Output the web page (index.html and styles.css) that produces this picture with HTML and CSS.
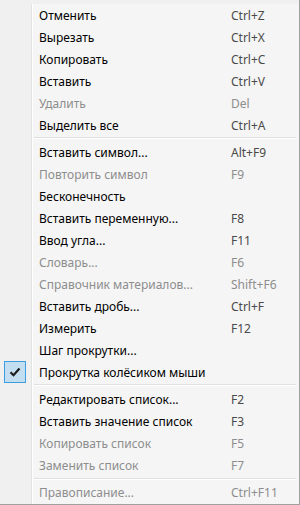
FILE: index.html
```html
<!DOCTYPE html>
<html lang="ru">
<head>
    <meta charset="UTF-8">
    <title>Меню</title>
    <link rel="stylesheet" href="styles.css">
</head>
<body>
    <div class="menu">
        <div class="item"><span class="icon"></span><span class="label">Отменить</span><span class="key">Ctrl+Z</span></div>
        <div class="item"><span class="icon"></span><span class="label">Вырезать</span><span class="key">Ctrl+X</span></div>
        <div class="item"><span class="icon"></span><span class="label">Копировать</span><span class="key">Ctrl+C</span></div>
        <div class="item"><span class="icon"></span><span class="label">Вставить</span><span class="key">Ctrl+V</span></div>
        <div class="item disabled"><span class="icon"></span><span class="label">Удалить</span><span class="key">Del</span></div>
        <div class="item"><span class="icon"></span><span class="label">Выделить все</span><span class="key">Ctrl+A</span></div>
        <div class="sep"></div>
        <div class="item"><span class="icon"></span><span class="label">Вставить символ...</span><span class="key">Alt+F9</span></div>
        <div class="item disabled"><span class="icon"></span><span class="label">Повторить символ</span><span class="key">F9</span></div>
        <div class="item"><span class="icon"></span><span class="label">Бесконечность</span><span class="key"></span></div>
        <div class="item"><span class="icon"></span><span class="label">Вставить переменную...</span><span class="key">F8</span></div>
        <div class="item"><span class="icon"></span><span class="label">Ввод угла...</span><span class="key">F11</span></div>
        <div class="item disabled"><span class="icon"></span><span class="label">Словарь...</span><span class="key">F6</span></div>
        <div class="item disabled"><span class="icon"></span><span class="label">Справочник материалов...</span><span class="key">Shift+F6</span></div>
        <div class="item"><span class="icon"></span><span class="label">Вставить дробь...</span><span class="key">Ctrl+F</span></div>
        <div class="item"><span class="icon"></span><span class="label">Измерить</span><span class="key">F12</span></div>
        <div class="item"><span class="icon"></span><span class="label">Шаг прокрутки...</span><span class="key"></span></div>
        <div class="item checked">
            <span class="icon">
                <span class="checkbox">
                    <svg width="12" height="10" viewBox="0 0 12 10"><path d="M1.5 5.2 L4.5 8.2 L10.5 1.5" fill="none" stroke="#1e1e1e" stroke-width="2.2"/></svg>
                </span>
            </span>
            <span class="label">Прокрутка колёсиком мыши</span><span class="key"></span>
        </div>
        <div class="sep"></div>
        <div class="item"><span class="icon"></span><span class="label">Редактировать список...</span><span class="key">F2</span></div>
        <div class="item"><span class="icon"></span><span class="label">Вставить значение список</span><span class="key">F3</span></div>
        <div class="item disabled"><span class="icon"></span><span class="label">Копировать список</span><span class="key">F5</span></div>
        <div class="item disabled"><span class="icon"></span><span class="label">Заменить список</span><span class="key">F7</span></div>
        <div class="sep"></div>
        <div class="item disabled"><span class="icon"></span><span class="label">Правописание...</span><span class="key">Ctrl+F11</span></div>
    </div>
</body>
</html>
```

FILE: styles.css
```css
* {
    margin: 0;
    padding: 0;
    box-sizing: border-box;
}

body {
    font-family: "Noto Sans", "Open Sans", sans-serif;
    font-size: 12px;
    background: #f0f0f0;
}

.menu {
    width: 300px;
    height: 505px;
    padding: 4px 0 0 0;
    border-right: 1px solid #a0a0a0;
    border-bottom: 1px solid #a0a0a0;
    background:
        linear-gradient(to right, #f0f0f0 0, #f0f0f0 31px, #e2e3e3 31px, #e2e3e3 32px, #ffffff 32px, #ffffff 33px, #f5f5f5 33px);
    background-clip: content-box;
    display: flex;
    flex-direction: column;
}

.item {
    height: 22px;
    display: grid;
    grid-template-columns: 39px 192px 1fr;
    align-items: center;
    color: #000;
}

.item .key {
    color: #4a4a4a;
}

.item.disabled .label,
.item.disabled .key {
    color: #8d8d8d;
}

.icon {
    height: 22px;
    display: flex;
    align-items: center;
}

.checkbox {
    width: 22px;
    height: 22px;
    margin-left: 4px;
    border: 1px solid #3d9de0;
    background: #c3def1;
    display: flex;
    align-items: center;
    justify-content: center;
}

.sep {
    height: 6px;
    margin-left: 34px;
    margin-right: 3px;
    padding-top: 1px;
}

.sep::before {
    content: "";
    display: block;
    height: 1px;
    background: #e0e0e0;
    border-bottom: 1px solid #ffffff;
    box-sizing: content-box;
}
```
